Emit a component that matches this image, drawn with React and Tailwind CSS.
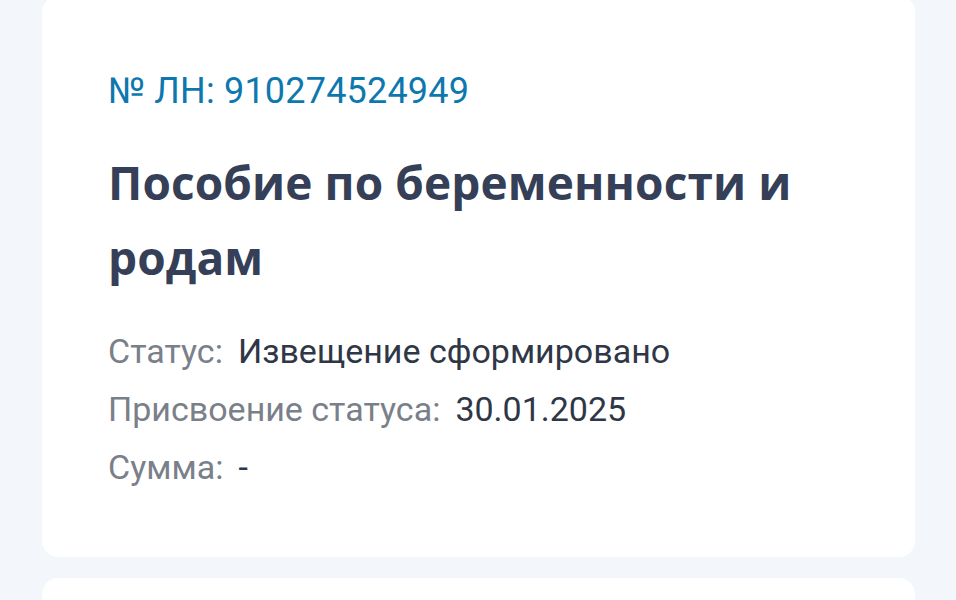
export default function App() {
  const rows = [
    { label: 'Статус:', value: 'Извещение сформировано' },
    { label: 'Присвоение статуса:', value: '30.01.2025' },
    { label: 'Сумма:', value: '-' },
  ];

  return (
    <div className="min-h-screen bg-[#f3f6fa] px-[42px] pr-[41px] overflow-hidden font-['Roboto',sans-serif]">
      <div className="-mt-1 flex flex-col gap-[21px]">
        {/* Benefit card */}
        <div className="bg-white rounded-2xl pl-[66px] pr-6 pt-[73px] pb-[61px]">
          <div className="text-[36px] leading-[44px] text-[#0d78ad] tracking-[0.2px]">№ ЛН: 910274524949</div>
          <h2 className="mt-[32px] text-[46px] leading-[75px] font-bold text-[#353f57] font-['Open_Sans',sans-serif] tracking-[0.1px]">
            Пособие по беременности и родам
          </h2>
          <div className="mt-[27px]">
            {rows.map((r) => (
              <div key={r.label} className="flex gap-[15px] text-[34px] leading-[58px]">
                <span className="text-[#7a8089]">{r.label}</span>
                <span className="text-[#2f3747]">{r.value}</span>
              </div>
            ))}
          </div>
        </div>

        {/* Next card */}
        <div className="bg-white rounded-2xl h-[200px]" />
      </div>
    </div>
  );
}
